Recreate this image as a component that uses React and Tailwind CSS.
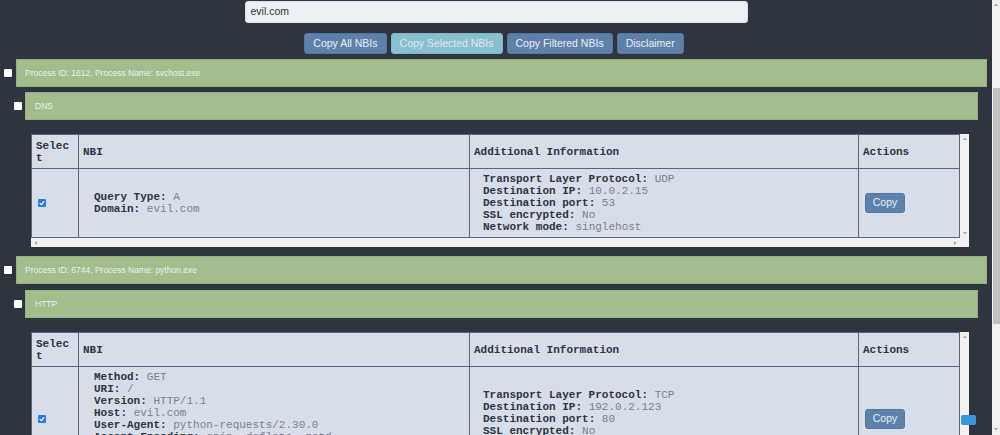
import React from 'react';

const mono = "font-['Liberation_Mono','Courier_New',monospace]";

const groups = [
  {
    label: 'Process ID: 1612, Process Name: svchost.exe',
    proto: 'DNS',
    nbi: [
      ['Query Type', 'A'],
      ['Domain', 'evil.com'],
    ],
    info: [
      ['Transport Layer Protocol', 'UDP'],
      ['Destination IP', '10.0.2.15'],
      ['Destination port', '53'],
      ['SSL encrypted', 'No'],
      ['Network mode', 'singlehost'],
    ],
  },
  {
    label: 'Process ID: 6744, Process Name: python.exe',
    proto: 'HTTP',
    nbi: [
      ['Method', 'GET'],
      ['URI', '/'],
      ['Version', 'HTTP/1.1'],
      ['Host', 'evil.com'],
      ['User-Agent', 'python-requests/2.30.0'],
      ['Accept-Encoding', 'gzip, deflate, zstd'],
      ['Accept', '*/*'],
      ['Connection', 'keep-alive'],
    ],
    info: [
      ['Transport Layer Protocol', 'TCP'],
      ['Destination IP', '192.0.2.123'],
      ['Destination port', '80'],
      ['SSL encrypted', 'No'],
      ['Network mode', 'singlehost'],
    ],
    floater: true,
  },
];

function Box() {
  return <span className="block h-[8px] w-[8px] shrink-0 rounded-[1px] bg-white" />;
}

function Checked() {
  return (
    <span className="flex h-[8px] w-[8px] items-center justify-center rounded-[1px] bg-[#2b7de9]">
      <svg viewBox="0 0 8 8" className="h-[8px] w-[8px]">
        <path d="M1.8 4.2 L3.3 5.7 L6.2 2.3" fill="none" stroke="white" strokeWidth="1.2" />
      </svg>
    </span>
  );
}

function Lines({ rows }) {
  return (
    <div className={`${mono} text-[11px] leading-[12px] whitespace-pre`}>
      {rows.map(([k, v]) => (
        <div key={k}>
          <span className="font-bold text-[#2e3440]">{k}:</span>
          <span className="text-[#7a808b]"> {v}</span>
        </div>
      ))}
    </div>
  );
}

function Arrow({ dir }) {
  const d = {
    up: 'M1 4 L3 1.5 L5 4 Z',
    down: 'M1 2 L3 4.5 L5 2 Z',
    left: 'M4 1 L1.5 3 L4 5 Z',
    right: 'M2 1 L4.5 3 L2 5 Z',
  }[dir];
  return (
    <svg viewBox="0 0 6 6" className="h-[6px] w-[6px]">
      <path d={d} fill="#a3a3a3" />
    </svg>
  );
}

function NbiTable({ g }) {
  const cell = 'border border-[#5c6579] px-[4px]';
  return (
    <div className="relative ml-[31px] mr-[23px] mt-[14px] flex">
      <div className="flex flex-1 flex-col">
        <table className="w-[928px] table-fixed border-collapse bg-[#d8dee9]">
          <colgroup>
            <col className="w-[47px]" />
            <col className="w-[391px]" />
            <col className="w-[389px]" />
            <col className="w-[101px]" />
          </colgroup>
          <thead>
            <tr className={`${mono} text-left text-[11px] font-bold leading-[12px] text-[#2e3440]`}>
              <th className={`${cell} break-all pt-[5px] pb-[4px]`}>Select</th>
              <th className={`${cell} pt-[5px] pb-[4px]`}>NBI</th>
              <th className={`${cell} pt-[5px] pb-[4px]`}>Additional Information</th>
              <th className={`${cell} pt-[5px] pb-[4px]`}>Actions</th>
            </tr>
          </thead>
          <tbody>
            <tr>
              <td className={`${cell} pl-[6px]`}>
                <Checked />
              </td>
              <td className={`${cell} pt-[4px] pb-[4px] pl-[15px]`}>
                <Lines rows={g.nbi} />
              </td>
              <td className={`${cell} pt-[4px] pb-[4px] pl-[13px]`}>
                <Lines rows={g.info} />
              </td>
              <td className={`${cell} pl-[6px]`}>
                <button className="block h-[20px] w-[40px] rounded-[3px] border border-[#5577a2] bg-[#5e81ac] text-[10.5px] text-[#eceff4]">
                  Copy
                </button>
              </td>
            </tr>
          </tbody>
        </table>
        <div className="flex h-[9px] items-center justify-between bg-[#f1f1f1] px-[2px]">
          <Arrow dir="left" />
          <Arrow dir="right" />
        </div>
      </div>
      <div className="flex w-[10px] flex-col items-center justify-between bg-[#f1f1f1] pt-[2px] pb-[11px]">
        <Arrow dir="up" />
        <Arrow dir="down" />
      </div>
      {g.floater && (
        <span className="absolute left-[930px] top-[83px] h-[10px] w-[15px] rounded-[2px] bg-[#3a97dc]" />
      )}
    </div>
  );
}

function Group({ g, first }) {
  return (
    <div className={first ? 'mt-[5px]' : 'mt-[9px]'}>
      <div className="flex items-center pl-[4px] pr-[5px]">
        <Box />
        <div className="ml-[4px] flex h-[28px] flex-1 items-center border border-[#96b07f] bg-[#a3be8c] pl-[8px] text-[8.5px] text-[#eceff4]">
          {g.label}
        </div>
      </div>
      <div className={`flex items-center pl-[14px] pr-[14px] ${first ? 'mt-[5px]' : 'mt-[6px]'}`}>
        <Box />
        <div className="ml-[3px] flex h-[28px] flex-1 items-center border border-[#96b07f] bg-[#a3be8c] pl-[9px] text-[8.5px] text-[#eceff4]">
          {g.proto}
        </div>
      </div>
      <NbiTable g={g} />
    </div>
  );
}

export default function App() {
  const btn = 'h-[21px] rounded-[3px] border px-[8px] text-[10.5px]';
  return (
    <div className="flex h-[435px] w-full overflow-hidden bg-[#2e3440] font-['Liberation_Sans',Arial,sans-serif]">
      <div className="flex-1 overflow-hidden">
        <div className="mx-auto mt-[1px] flex h-[22px] w-[503px] items-center rounded-[3px] border border-[#d8dee9] bg-[#eceff4] pl-[5px] text-[10.5px] text-[#2e3440]">
          evil.com
        </div>
        <div className="mt-[10px] flex justify-center gap-[4px] pr-[4px]">
          <button className={`${btn} border-[#5576a0] bg-[#5e81ac] text-[#eceff4]`}>Copy All NBIs</button>
          <button className={`${btn} border-[#7fb5c6] bg-[#88c0d0] text-[#e1e8ee]`}>Copy Selected NBIs</button>
          <button className={`${btn} border-[#5576a0] bg-[#5e81ac] text-[#eceff4]`}>Copy Filtered NBIs</button>
          <button className={`${btn} border-[#5576a0] bg-[#5e81ac] text-[#eceff4]`}>Disclaimer</button>
        </div>
        {groups.map((g, i) => (
          <Group key={g.label} g={g} first={i === 0} />
        ))}
      </div>
      <div className="flex w-[8px] flex-col items-center bg-[#f1f1f1] pt-[2px]">
        <Arrow dir="up" />
        <div className="mt-[80px] h-[236px] w-[7px] self-end bg-[#c1c1c1]" />
        <div className="mt-auto mb-[3px]">
          <Arrow dir="down" />
        </div>
      </div>
    </div>
  );
}
